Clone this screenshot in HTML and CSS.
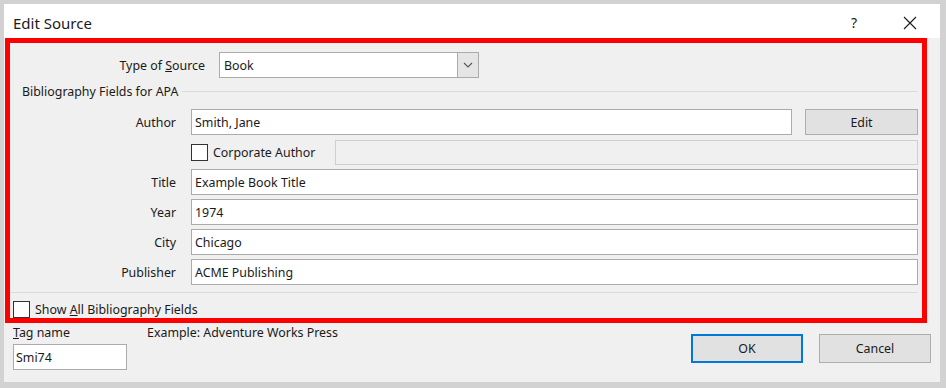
FILE: index.html
```html
<!DOCTYPE html>
<html lang="en">
<head>
    <meta charset="UTF-8">
    <meta name="viewport" content="width=device-width, initial-scale=1.0">
    <title>Edit Source</title>
    <link rel="stylesheet" href="styles.css">
</head>
<body>
    <div class="dialog">
        <div class="titlebar">
            <span class="title">Edit Source</span>
            <span class="help">?</span>
            <svg class="close" width="14" height="14" viewBox="0 0 14 14">
                <path d="M1 1 L13 13 M13 1 L1 13" stroke="#1a1a1a" stroke-width="1.1" fill="none"/>
            </svg>
        </div>

        <div class="fields">
            <div class="type-row">
                <label class="type-label">Type of <u>S</u>ource</label>
                <div class="select">
                    <span class="select-value">Book</span>
                    <span class="select-btn">
                        <svg width="10" height="6" viewBox="0 0 10 6">
                            <path d="M1 1 L5 5 L9 1" stroke="#555" stroke-width="1.1" fill="none"/>
                        </svg>
                    </span>
                </div>
            </div>

            <div class="group-head">
                <span>Bibliography Fields for APA</span>
                <span class="group-line"></span>
            </div>

            <div class="row first">
                <label class="lbl">Author</label>
                <div class="input author-input">Smith, Jane</div>
                <button class="btn edit-btn">Edit</button>
            </div>
            <div class="row">
                <span class="lbl"></span>
                <span class="check"></span>
                <span class="corp-label">Corporate Author</span>
                <div class="input disabled"></div>
            </div>
            <div class="row">
                <label class="lbl">Title</label>
                <div class="input">Example Book Title</div>
            </div>
            <div class="row">
                <label class="lbl">Year</label>
                <div class="input">1974</div>
            </div>
            <div class="row">
                <label class="lbl">City</label>
                <div class="input">Chicago</div>
            </div>
            <div class="row">
                <label class="lbl">Publisher</label>
                <div class="input">ACME Publishing</div>
            </div>

            <div class="sep"></div>

            <div class="show-all">
                <span class="check"></span>
                <span>Show <u>A</u>ll Bibliography Fields</span>
            </div>
        </div>

        <div class="footer">
            <div class="tag-block">
                <div class="tag-label"><u>T</u>ag name</div>
                <div class="input tag-input">Smi74</div>
            </div>
            <div class="example">Example: Adventure Works Press</div>
            <div class="buttons">
                <button class="btn ok-btn">OK</button>
                <button class="btn cancel-btn">Cancel</button>
            </div>
        </div>
    </div>
</body>
</html>
```

FILE: styles.css
```css
/* base */
* {
    margin: 0;
    padding: 0;
    box-sizing: border-box;
}

body {
    width: 946px;
    height: 388px;
    background-color: #d2d2d2;
    font-family: 'Noto Sans', 'Open Sans', sans-serif;
    font-size: 12.4px;
    color: #1a1a1a;
    padding: 4px 6px 6px 4px;
}

.dialog {
    width: 936px;
    height: 378px;
    background-color: #f0f0f0;
    display: flex;
    flex-direction: column;
}

/* title bar */
.titlebar {
    height: 34px;
    background: #fff;
    display: flex;
    align-items: center;
    padding: 3px 0 0 9px;
}

.title {
    font-size: 15px;
    flex: 1;
}

.help {
    font-size: 14px;
    margin-right: 46px;
}

.close {
    margin-right: 23px;
}

/* red marked area */
.fields {
    margin-left: 1px;
    width: 922px;
    height: 285px;
    border: 5px solid #ff0000;
    padding: 9px 4px 0 0;
}

.type-row {
    display: flex;
    align-items: center;
    height: 26px;
}

.type-label {
    width: 195px;
    text-align: right;
    margin-right: 14px;
}

.select {
    width: 260px;
    height: 26px;
    background: #fff;
    border: 1px solid #ababab;
    display: flex;
    align-items: center;
}

.select-value {
    flex: 1;
    padding-left: 4px;
}

.select-btn {
    width: 21px;
    height: 24px;
    background: #e5e5e5;
    border-left: 1px solid #ababab;
    display: flex;
    align-items: center;
    justify-content: center;
}

.group-head {
    display: flex;
    align-items: center;
    height: 26px;
    padding-left: 12px;
}

.group-line {
    flex: 1;
    height: 1px;
    background: #dcdcdc;
    margin-left: 4px;
    margin-top: 1px;
}

.row {
    display: flex;
    align-items: center;
    height: 26px;
    margin-top: 4px;
}

.row.first {
    margin-top: 5px;
}

.lbl {
    width: 166px;
    text-align: right;
    margin-right: 15px;
    flex-shrink: 0;
}

.input {
    flex: 1;
    height: 26px;
    background: #fff;
    border: 1px solid #ababab;
    padding-left: 3px;
    display: flex;
    align-items: center;
}

.input.disabled {
    background: #f0f0f0;
    border-color: #cfcfcf;
    height: 25px;
}

.author-input {
    flex: 0 0 601px;
}

.btn {
    font-family: inherit;
    font-size: 12.4px;
    color: #1a1a1a;
    background: #e1e1e1;
    border: 1px solid #adadad;
    height: 26px;
}

.edit-btn {
    flex: 1;
    margin-left: 13px;
}

.check {
    width: 17px;
    height: 17px;
    background: #fff;
    border: 1px solid #333;
    flex-shrink: 0;
}

.corp-label {
    margin-left: 5px;
    width: 122px;
}

.sep {
    height: 1px;
    background: #dcdcdc;
    margin: 7px 0 8px 0;
}

.show-all {
    display: flex;
    align-items: center;
    padding-left: 3px;
    gap: 5px;
}

/* footer */
.footer {
    display: flex;
    padding: 1px 9px 0 9px;
}

.tag-block {
    width: 134px;
}

.tag-label {
    height: 16px;
}

.tag-input {
    width: 114px;
    height: 26px;
    margin-top: 4px;
    padding-left: 2px;
}

.example {
    flex: 1;
}

.buttons {
    display: flex;
    gap: 16px;
    padding-top: 10px;
}

.ok-btn,
.cancel-btn {
    width: 112px;
    height: 29px;
}

.ok-btn {
    border: 2px solid #0078d7;
}
```
